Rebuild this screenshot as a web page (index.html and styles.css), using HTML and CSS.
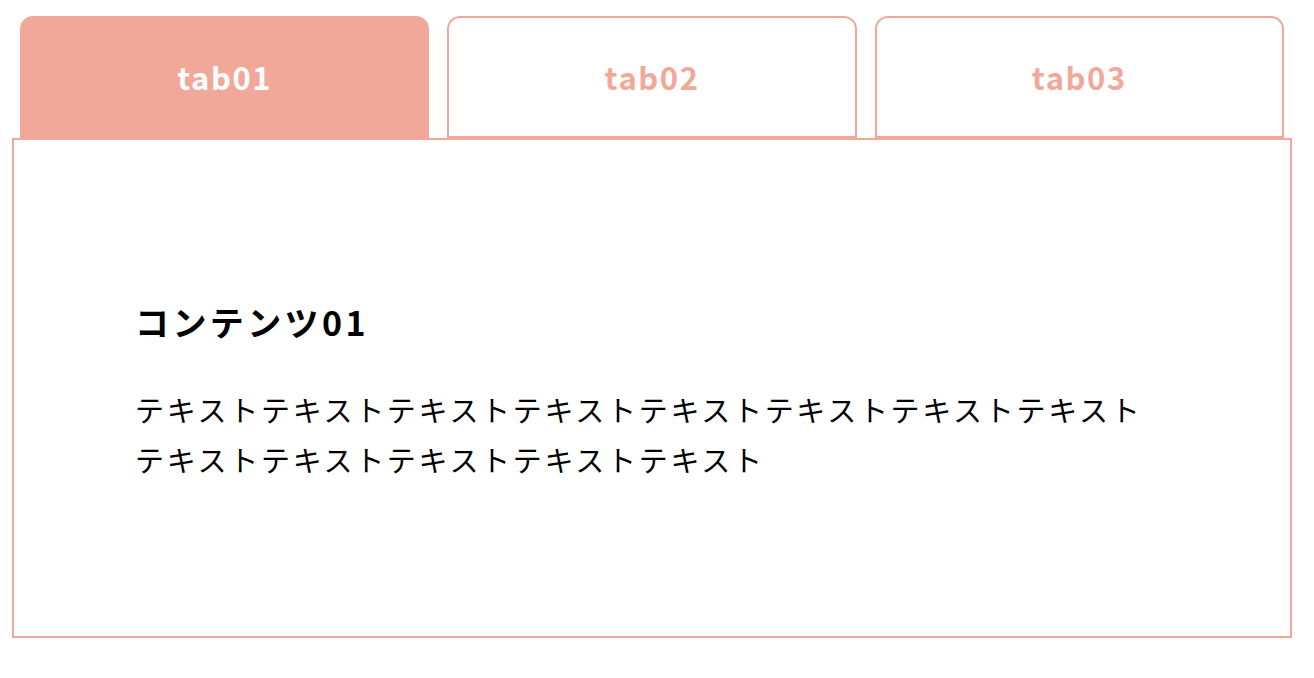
FILE: index.html
```html
<!DOCTYPE html>
<html lang="ja">
<head>
    <meta charset="UTF-8">
    <meta name="viewport" content="width=device-width, initial-scale=1.0">
    <title>タブ切り替え</title>
    <link rel="stylesheet" href="styles.css">
</head>
<body>
    <div class="tab-wrap">
        <ul class="tab-list">
            <li class="tab is-active">tab01</li>
            <li class="tab">tab02</li>
            <li class="tab">tab03</li>
        </ul>

        <div class="tab-panel">
            <h2 class="panel-title">コンテンツ01</h2>
            <p class="panel-text">テキストテキストテキストテキストテキストテキストテキストテキストテキストテキストテキストテキストテキスト</p>
        </div>
    </div>
</body>
</html>
```

FILE: styles.css
```css
* {
    box-sizing: border-box;
}

body {
    font-family: 'Noto Sans CJK JP', 'Noto Sans', sans-serif;
    background-color: #fff;
    color: #000;
    margin: 0;
    padding: 16px 12px;
}

.tab-wrap {
    width: 1280px;
}

.tab-list {
    display: flex;
    gap: 18px;
    list-style: none;
    margin: 0;
    padding: 0 8px;
}

.tab {
    flex: 1;
    height: 122px;
    display: flex;
    align-items: center;
    justify-content: center;
    border: 2px solid #f2a899;
    border-radius: 13px 13px 0 0;
    color: #f2a899;
    font-size: 31px;
    font-weight: 700;
    letter-spacing: 0.05em;
    padding-bottom: 2px;
    cursor: pointer;
}

.tab.is-active {
    background-color: #f2a899;
    color: #fff;
}

.tab-panel {
    border: 2px solid #f2a899;
    height: 500px;
    padding: 158px 120px 0 121px;
}

.panel-title {
    font-size: 34px;
    font-weight: 700;
    line-height: 48px;
    letter-spacing: 0.1em;
    margin: 0 0 38px;
}

.panel-text {
    font-size: 29px;
    line-height: 50px;
    letter-spacing: 2.7px;
    margin: 0;
}
```
